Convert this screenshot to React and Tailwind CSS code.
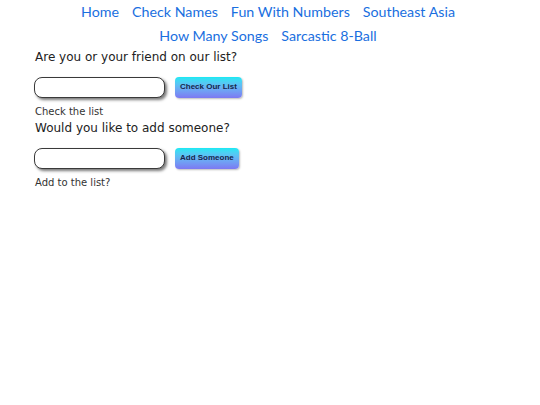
import React from "react";

const links = ["Home", "Check Names", "Fun With Numbers", "Southeast Asia", "How Many Songs", "Sarcastic 8-Ball"];

function Section({ heading, button, label }) {
  return (
    <div className="flex flex-col">
      <div className="text-[12px] leading-[14px] text-[#222]" style={{ fontFamily: '"DejaVu Sans", sans-serif' }}>{heading}</div>
      <div className="mt-[12px] flex items-center h-[22px]">
        <input className="ml-[-1px] w-[131px] h-[21px] rounded-[8px] border-[1.5px] border-[#3a3a3a] bg-white shadow-[2px_2px_3px_#7a7a7a] outline-none" />
        <button
          className="ml-[10px] h-[21px] px-[5px] rounded-[4px] bg-gradient-to-b from-[#14e9f3] to-[#7c78f2] text-[8px] font-bold text-[#15264a] shadow-[1px_1px_2px_#bbb]"
          style={{ fontFamily: '"Liberation Sans", Arial, sans-serif' }}
        >
          {button}
        </button>
      </div>
      <div className="mt-[8px] text-[10px] leading-[12px] text-[#333]" style={{ fontFamily: '"DejaVu Sans", sans-serif' }}>{label}</div>
    </div>
  );
}

export default function App() {
  return (
    <div className="w-[540px] h-[405px] bg-white">
      <nav className="flex flex-wrap justify-center pt-[1px] pl-[60px] pr-[64px] gap-x-[13px] gap-y-[2px]" style={{ fontFamily: 'Lato, "Open Sans", sans-serif' }}>
        {links.map((l) => (
          <a key={l} href="#" className="text-[14.25px] leading-[22px] text-[#1a6fe0]">{l}</a>
        ))}
      </nav>
      <div className="pl-[35px] pt-[3px] flex flex-col gap-[3px]">
        <Section heading="Are you or your friend on our list?" button="Check Our List" label="Check the list" />
        <Section heading="Would you like to add someone?" button="Add Someone" label="Add to the list?" />
      </div>
    </div>
  );
}
